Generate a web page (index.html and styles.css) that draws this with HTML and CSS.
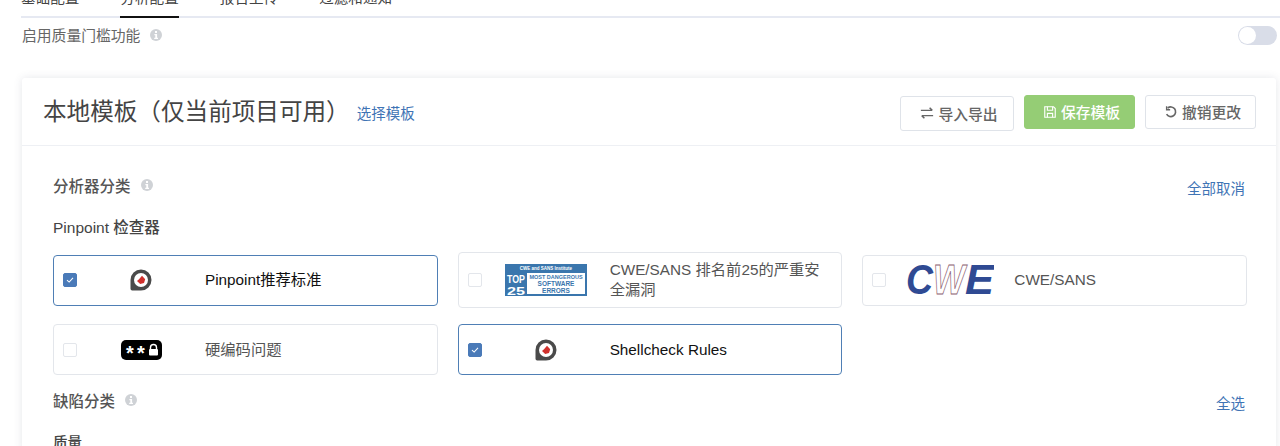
FILE: index.html
```html
<!DOCTYPE html>
<html lang="zh-CN">
<head>
    <meta charset="UTF-8">
    <meta name="viewport" content="width=device-width, initial-scale=1.0">
    <title>分析配置</title>
    <link rel="stylesheet" href="styles.css">
</head>
<body>

<svg class="defs" width="0" height="0" aria-hidden="true">
    <symbol id="info" viewBox="0 0 12 12">
        <circle cx="6" cy="6" r="6" fill="#cfd2d6"/>
        <rect x="5" y="2" width="2" height="2" fill="#fff"/>
        <path d="M4.4 5h2.7v3.7h.9V10H4.2V8.7h1.1V6.2h-.9z" fill="#fff"/>
    </symbol>
    <symbol id="pin" viewBox="0 0 22 22">
        <path d="M11 .5a10.5 10.5 0 1 1 0 21H2.2A1.7 1.7 0 0 1 .5 19.800V11A10.500 10.500 0 0 1 11 .5z" fill="#4a4a4a"/>
        <circle cx="11" cy="11" r="7" fill="#fff"/>
        <path d="M12 6.800l3.200 3.400-1.200 3.800-3.800 1-3.200-3 2-1.800z" fill="#d0312d"/>
    </symbol>
</svg>

<nav class="tabs">
    <a class="tab">基础配置</a>
    <a class="tab active">分析配置</a>
    <a class="tab">报告上传</a>
    <a class="tab">过滤和通知</a>
</nav>

<div class="gate-row">
    <span class="gate-label">启用质量门槛功能</span>
    <svg class="info"><use href="#info"/></svg>
    <span class="toggle"><span class="knob"></span></span>
</div>

<div class="card">
    <div class="card-head">
        <h1>本地模板（仅当前项目可用）</h1>
        <a class="link pick">选择模板</a>
        <div class="actions">
            <button class="btn import">
                <svg class="btn-icon" viewBox="0 0 16 16" fill="none" stroke="currentColor" stroke-width="1.700"><path d="M1 5h13M11 2l3 3M15 11H2M5 14l-3-3"/></svg>
                导入导出
            </button>
            <button class="btn save">
                <svg class="btn-icon" viewBox="0 0 16 16" fill="none" stroke="currentColor" stroke-width="1.300"><path d="M2 2h10l2 2v10H2z"/><path d="M5 2v4h6V2M5 14V9.500h6V14"/></svg>
                保存模板
            </button>
            <button class="btn">
                <svg class="btn-icon" viewBox="0 0 16 16" fill="none" stroke="currentColor" stroke-width="1.900"><path d="M4.200 3.500A5.500 5.500 0 1 1 3 10.500"/><path d="M3 1.500v4h4" stroke-width="1.600"/></svg>
                撤销更改
            </button>
        </div>
    </div>

    <div class="card-body">
        <div class="section-head">
            <span class="section-title">分析器分类</span>
            <svg class="info"><use href="#info"/></svg>
            <a class="link section-link">全部取消</a>
        </div>

        <div class="group-title">Pinpoint 检查器</div>

        <div class="checkers">
            <div class="checker on">
                <span class="check"><svg viewBox="0 0 14 14" fill="none" stroke="#fff" stroke-width="1.200"><path d="M3.500 7.200l2.500 2.300 4.500-5"/></svg></span>
                <span class="logo"><svg class="pin"><use href="#pin"/></svg></span>
                <span class="name">Pinpoint推荐标准</span>
            </div>
            <div class="checker">
                <span class="check"></span>
                <span class="logo">
                    <svg class="top25" viewBox="0 0 82 32">
                        <rect width="82" height="32" fill="#3a76ad"/>
                        <rect x="22" y="9" width="58" height="21" fill="#fff"/>
                        <text x="41" y="6" class="t-top" text-anchor="middle">CWE and SANS Institute</text>
                        <text x="2" y="19" class="t-num" textLength="18" lengthAdjust="spacingAndGlyphs">TOP</text>
                        <text x="2" y="31" class="t-num" textLength="18" lengthAdjust="spacingAndGlyphs">25</text>
                        <text x="51" y="15" class="t-sm" text-anchor="middle">MOST DANGEROUS</text>
                        <text x="51" y="22" class="t-big" text-anchor="middle">SOFTWARE</text>
                        <text x="51" y="28.500" class="t-big" text-anchor="middle">ERRORS</text>
                    </svg>
                </span>
                <span class="name">CWE/SANS 排名前25的严重安全漏洞</span>
            </div>
            <div class="checker">
                <span class="check"></span>
                <span class="logo">
                    <svg class="cwe" viewBox="0 0 88 32">
                        <text x="0" y="30" class="c-blue" textLength="27" lengthAdjust="spacingAndGlyphs">C</text>
                        <text x="59" y="30" class="c-blue" textLength="29" lengthAdjust="spacingAndGlyphs">E</text>
                        <text x="27" y="30" class="c-line" textLength="32" lengthAdjust="spacingAndGlyphs">W</text>
                    </svg>
                </span>
                <span class="name">CWE/SANS</span>
            </div>
            <div class="checker">
                <span class="check"></span>
                <span class="logo">
                    <svg class="secret" viewBox="0 0 41 20">
                        <rect width="41" height="20" rx="5" fill="#000"/>
                        <text x="5" y="20" class="s-star">*</text>
                        <text x="16" y="20" class="s-star">*</text>
                        <path d="M29.500 9V7.500a3 3 0 0 1 6 0V9" fill="none" stroke="#fff" stroke-width="1.400"/>
                        <rect x="28" y="9" width="9" height="6.500" rx="1" fill="#fff"/>
                    </svg>
                </span>
                <span class="name">硬编码问题</span>
            </div>
            <div class="checker on">
                <span class="check"><svg viewBox="0 0 14 14" fill="none" stroke="#fff" stroke-width="1.200"><path d="M3.500 7.200l2.500 2.300 4.500-5"/></svg></span>
                <span class="logo"><svg class="pin"><use href="#pin"/></svg></span>
                <span class="name">Shellcheck Rules</span>
            </div>
        </div>

        <div class="section-head defects">
            <span class="section-title">缺陷分类</span>
            <svg class="info"><use href="#info"/></svg>
            <a class="link section-link">全选</a>
        </div>

        <div class="group-title quality">质量</div>
    </div>
</div>

</body>
</html>
```

FILE: styles.css
```css
html, body {
    height: 100%;
    overflow: hidden;
}

body {
    margin: 0;
    background-color: #fff;
    color: #555;
    font-family: "Liberation Sans", "Noto Sans CJK SC", sans-serif;
    font-size: 14px;
}

.defs {
    display: block;
}

.tabs {
    display: flex;
    align-items: flex-end;
    gap: 41px;
    height: 16px;
    margin-left: 21px;
    border-bottom: 2px solid #e6e9f2;
}

.tab {
    margin-bottom: -2px;
    padding: 0 0 8px;
    border-bottom: 2px solid transparent;
    color: #444;
    font-size: 14.600px;
    line-height: 20px;
}

.tab.active {
    border-bottom-color: #111;
}

.gate-row {
    display: flex;
    align-items: center;
    height: 20px;
    margin: 7px 3px 0 22px;
}

.gate-label {
    margin-top: -2px;
    color: #666;
    font-size: 14.800px;
}

.info {
    width: 12px;
    height: 12px;
    margin-left: 10px;
}

.toggle {
    display: flex;
    align-items: center;
    width: 39px;
    height: 19px;
    margin-left: auto;
    box-sizing: border-box;
    padding: 1px;
    border-radius: 10px;
    background-color: #d9dde8;
}

.knob {
    width: 17px;
    height: 17px;
    border-radius: 50%;
    background-color: #fff;
}

.card {
    margin: 33px 4px 0 22px;
    border-radius: 3px;
    background-color: #fff;
    box-shadow: 0 0 8px rgba(60, 70, 100, 0.13);
}

.card-head {
    display: flex;
    align-items: center;
    height: 67px;
    padding: 0 20px 0 21px;
    border-bottom: 1px solid #eef0f4;
}

.card-head h1 {
    margin: -4px 0 0;
    color: #444;
    font-size: 23.600px;
    font-weight: 400;
}

.link {
    color: #3f74b5;
    font-size: 14.500px;
}

.pick {
    margin: 2px 0 0 7px;
}

.actions {
    display: flex;
    align-items: center;
    gap: 10px;
    margin-left: auto;
}

.btn {
    display: flex;
    align-items: center;
    justify-content: center;
    gap: 4px;
    width: 111px;
    height: 34px;
    padding: 0 0 0 4px;
    border: 1px solid #dfe3e9;
    border-radius: 3px;
    background-color: #fff;
    color: #666;
    font-family: inherit;
    font-size: 14.800px;
    font-weight: 500;
}

.btn.import {
    width: 114px;
    height: 35px;
    margin-top: 3px;
}

.btn.save {
    border-color: #95cd75;
    background-color: #95cd75;
    color: #fff;
}

.btn-icon {
    width: 14px;
    height: 14px;
}

.card-body {
    padding: 29px 29px 0 31px;
}

.section-head {
    display: flex;
    align-items: center;
    height: 20px;
}

.section-title {
    font-size: 15.500px;
    font-weight: 500;
}

.section-link {
    margin: 4px 2px 0 auto;
}

.group-title {
    margin-top: 23px;
    color: #444;
    font-size: 15.500px;
    font-weight: 500;
    line-height: 20px;
}

.checkers {
    display: grid;
    grid-template-columns: repeat(3, 1fr);
    align-items: center;
    gap: 16px 20px;
    margin-top: 14px;
}

.checker {
    display: flex;
    align-items: center;
    min-height: 51px;
    box-sizing: border-box;
    padding: 7px 20px 7px 9px;
    border: 1px solid #e3e6eb;
    border-radius: 4px;
}

.checker.on {
    border-color: #4f7fb5;
}

.check {
    flex: none;
    width: 14px;
    height: 14px;
    box-sizing: border-box;
    border: 1px solid #e3e6eb;
    border-radius: 2px;
    background-color: #fff;
}

.check svg {
    display: block;
    width: 12px;
    height: 12px;
}

.on .check {
    border-color: #4a7ab8;
    background-color: #4a7ab8;
}

.logo {
    display: flex;
    flex: none;
    justify-content: center;
    width: 128px;
}

.name {
    font-size: 15.300px;
    line-height: 20px;
}

.on .name {
    color: #111;
}

.pin {
    width: 22px;
    height: 22px;
}

.top25 {
    width: 82px;
    height: 32px;
}

.cwe {
    width: 88px;
    height: 32px;
}

.secret {
    width: 41px;
    height: 20px;
}

.t-top {
    fill: #fff;
    font-size: 4.500px;
    font-weight: 700;
}

.t-num {
    fill: #fff;
    font-size: 11.500px;
    font-weight: 700;
}

.t-sm {
    fill: #3a76ad;
    font-size: 5.500px;
    font-weight: 700;
}

.t-big {
    fill: #3a76ad;
    font-size: 6.500px;
    font-weight: 700;
}

.c-blue {
    fill: #2f4a93;
    font-size: 43px;
    font-style: italic;
    font-weight: 700;
}

.c-line {
    fill: #fff;
    stroke: #8a6070;
    stroke-width: 0.800px;
    font-size: 43px;
    font-style: italic;
    font-weight: 700;
}

.s-star {
    fill: #fff;
    font-size: 20px;
    font-weight: 700;
}

.defects {
    margin-top: 15px;
}

.quality {
    margin-top: 23px;
    font-size: 14.500px;
}
```
